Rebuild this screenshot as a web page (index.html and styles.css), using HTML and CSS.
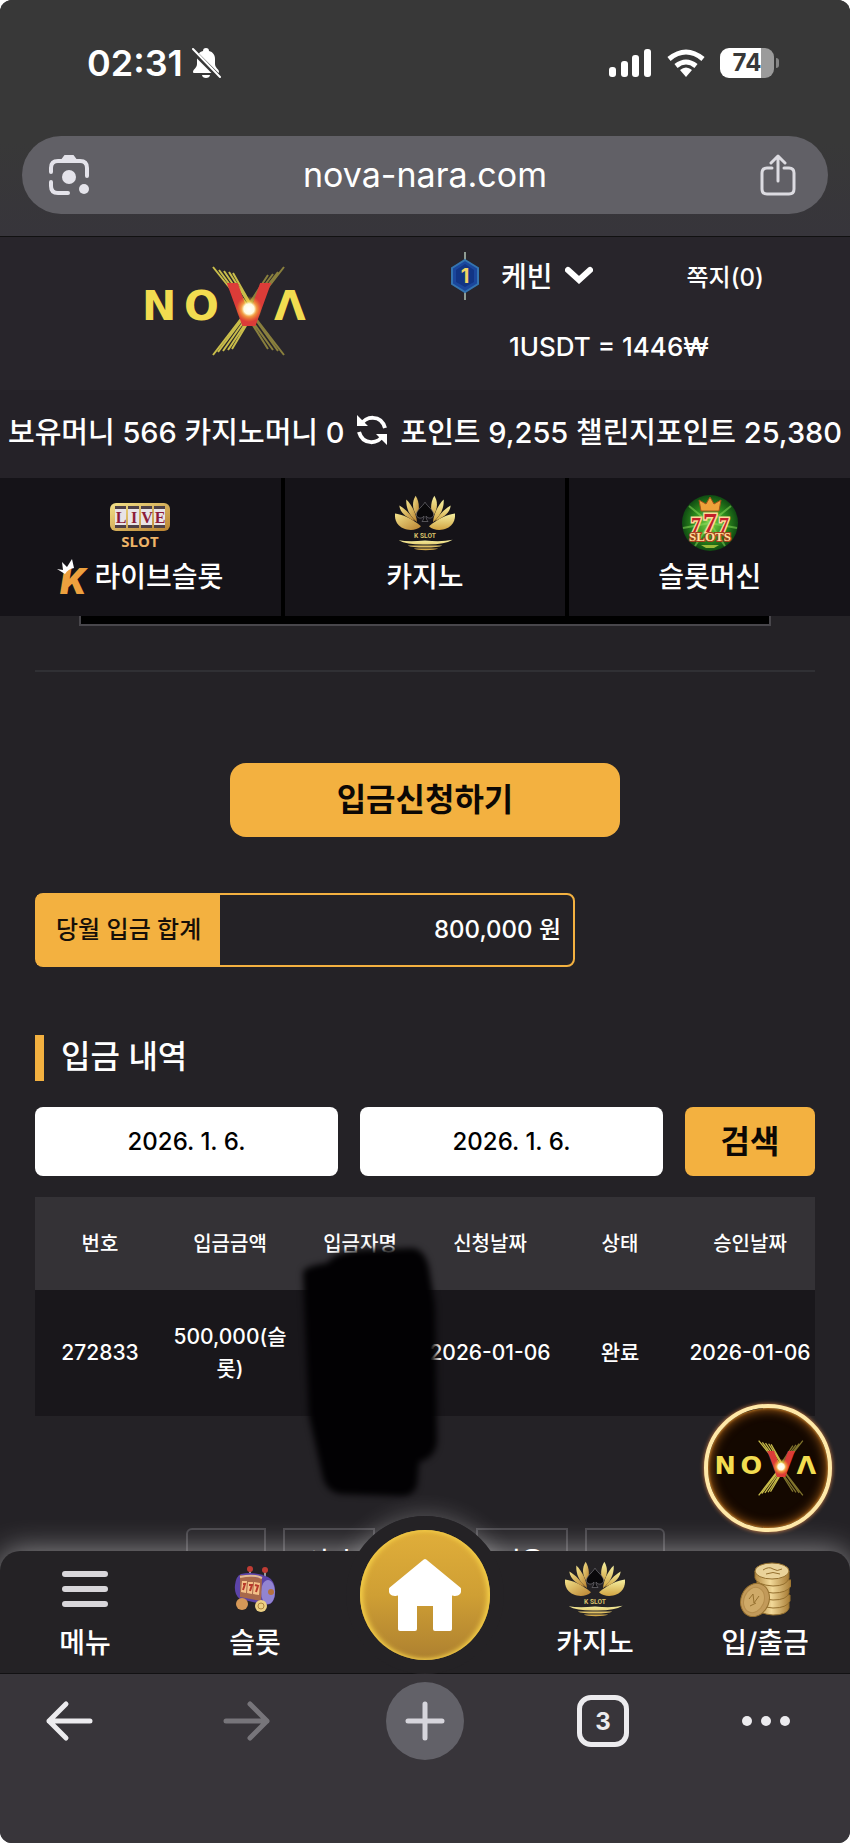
FILE: index.html
```html
<!DOCTYPE html>
<html lang="ko">
<head>
    <meta charset="UTF-8">
    <meta name="viewport" content="width=device-width, initial-scale=1.0">
    <title>nova-nara.com</title>
    <link rel="stylesheet" href="styles.css">
</head>
<body>
    <!-- shared gradients -->
    <svg class="defs" width="0" height="0" aria-hidden="true">
        <defs>
            <linearGradient id="gold" x1="0" y1="0" x2="1" y2="1">
                <stop offset="0" stop-color="#f3e28a"/>
                <stop offset="1" stop-color="#b9812f"/>
            </linearGradient>
            <linearGradient id="goldRight" x1="0" y1="0" x2="0" y2="1">
                <stop offset="0" stop-color="#f6f0a0"/>
                <stop offset="1" stop-color="#d1a442"/>
            </linearGradient>
            <radialGradient id="flare">
                <stop offset="0" stop-color="#fff"/>
                <stop offset="0.4" stop-color="#fffbe0"/>
                <stop offset="0.6" stop-color="#ffd84a" stop-opacity="0.6"/>
                <stop offset="1" stop-color="#ffb020" stop-opacity="0"/>
            </radialGradient>
            <radialGradient id="green">
                <stop offset="0" stop-color="#7fd04a"/>
                <stop offset="0.6" stop-color="#2c8a1c"/>
                <stop offset="1" stop-color="#0f4a12"/>
            </radialGradient>
            <linearGradient id="coin" x1="0" y1="0" x2="1" y2="0">
                <stop offset="0" stop-color="#b58a42"/>
                <stop offset="0.45" stop-color="#f2d999"/>
                <stop offset="1" stop-color="#a87c35"/>
            </linearGradient>
        </defs>
    </svg>

    <header class="browser-top">
        <div class="status-bar">
            <div class="status-left">
                <span class="time">02:31</span>
                <svg width="30" height="32" viewBox="0 0 30 32" aria-hidden="true">
                    <path d="M15 1c2 0 3 1 3 3 4 1 6 4 6 8v5c0 4 4 5 4 8 0 1-1 1-2 1H4c-1 0-2 0-2-1 0-3 4-4 4-8v-5c0-4 2-7 6-8 0-2 1-3 3-3zM11 28h8c0 2-2 3-4 3s-4-1-4-3z" fill="#fff"/>
                    <path d="M1 3l28 28" stroke="#383838" stroke-width="5"/>
                    <path d="M2 2l27 28" stroke="#fff" stroke-width="2" stroke-linecap="round"/>
                </svg>
            </div>
            <div class="status-right">
                <svg width="43" height="28" viewBox="0 0 43 28" fill="#fff" aria-hidden="true">
                    <rect x="0" y="18" width="7" height="10" rx="3"/>
                    <rect x="12" y="12" width="7" height="16" rx="3"/>
                    <rect x="23" y="6" width="7" height="22" rx="3"/>
                    <rect x="35" y="0" width="7" height="28" rx="3"/>
                </svg>
                <svg width="38" height="28" viewBox="0 0 38 28" fill="none" stroke="#fff" stroke-width="5" aria-hidden="true">
                    <path d="M2 10Q19-4 36 10"/>
                    <path d="M9 17Q19 9 29 17"/>
                    <path d="M13 21Q19 16 25 21L19 28Z" fill="#fff" stroke="none"/>
                </svg>
                <div class="battery"><span>74</span></div>
            </div>
        </div>
        <div class="url-bar">
            <button class="icon-btn" aria-label="이미지 검색">
                <svg width="42" height="42" viewBox="0 0 42 42" fill="none" stroke="#e4e3ea" stroke-width="4" stroke-linecap="round">
                    <path d="M3 18V14Q3 7 10 7H32Q39 7 39 14V22M3 28V32Q3 39 10 39H20"/>
                    <path d="M14 6L17 2H25L28 6Z" fill="#e4e3ea" stroke-width="2"/>
                    <circle cx="21" cy="23" r="7" fill="#e4e3ea" stroke="none"/>
                    <circle cx="36" cy="35" r="5" fill="#e4e3ea" stroke="none"/>
                </svg>
            </button>
            <span class="url">nova-nara.com</span>
            <button class="icon-btn" aria-label="공유">
                <svg width="36" height="42" viewBox="0 0 36 42" fill="none" stroke="#dcdbe1" stroke-width="3" stroke-linecap="round" stroke-linejoin="round">
                    <path d="M12 14H7Q2 14 2 19V35Q2 40 7 40H29Q34 40 34 35V19Q34 14 29 14H24M18 27V3M11 9L18 2L25 9"/>
                </svg>
            </button>
        </div>
    </header>

    <div class="site-header">
        <a class="logo" href="#" aria-label="NOVA">
            <svg width="166" height="90" viewBox="0 0 166 90">
                <g id="nova">
                    <g fill="none" stroke="#c9bd4a" stroke-width="2">
                        <path d="M68 1L104 46M74 4L105 46M79 5L106 45M84 6L108 44M88 7L109 44"/>
                        <path d="M139 1L104 46M133 6L103 45M128 8L101 44M123 9L100 44" opacity="0.6"/>
                        <path d="M68 89L98 50M73 86L100 50M78 85L102 51M83 84L104 52M87 83L105 53"/>
                        <path d="M139 89L109 50M133 85L108 50M128 84L105 52M123 83L104 53" opacity="0.6"/>
                    </g>
                    <g font-family="DejaVu Sans, sans-serif" font-size="41" font-weight="bold" fill="#f2dc50">
                        <text x="-3" y="54">N</text>
                        <text x="39" y="54">O</text>
                        <text x="129" y="54">Λ</text>
                    </g>
                    <text x="104" y="60" text-anchor="middle" font-family="DejaVu Sans, sans-serif" font-size="58" font-weight="bold" fill="#dc3c38">V</text>
                    <circle cx="104" cy="43" r="13" fill="url(#flare)"/>
                </g>
            </svg>
        </a>
        <div class="user">
            <div class="user-row">
                <svg width="28" height="48" viewBox="0 0 28 48" aria-hidden="true">
                    <path d="M14 0V9M14 39V48" stroke="#8f9c92" stroke-width="2"/>
                    <path d="M14 8L27 16V32L14 40L1 32V16Z" fill="#1b479c" stroke="#3474b0" stroke-width="2"/>
                    <path d="M14 12L23 18V30L14 35L5 30V18Z" fill="#123584"/>
                    <text x="14" y="31" text-anchor="middle" font-family="Inter, sans-serif" font-size="20" font-weight="bold" fill="#f2d464">1</text>
                </svg>
                <button class="user-name">케빈
                    <svg width="28" height="18" viewBox="0 0 28 18" fill="none" stroke="#fff" stroke-width="6" stroke-linecap="round"><path d="M3 4L14 14L25 4"/></svg>
                </button>
                <a class="message" href="#">쪽지(0)</a>
            </div>
            <div class="rate">1USDT = 1446₩</div>
        </div>
    </div>

    <div class="money">
        <span>보유머니 566 카지노머니 0</span>
        <button class="icon-btn" aria-label="새로고침">
            <svg width="32" height="32" viewBox="0 0 32 32" fill="none" stroke="#fff" stroke-width="4">
                <path d="M5 11C9 2 25 0 29 14M27 21C23 30 7 32 3 18"/>
                <path d="M1 1V12H12ZM31 31V20H20Z" fill="#fff" stroke="none"/>
            </svg>
        </button>
        <span>포인트 9,255 챌린지포인트 25,380</span>
    </div>

    <nav class="games">
        <a href="#">
            <svg width="62" height="58" viewBox="0 0 62 58" aria-hidden="true">
                <rect x="1" y="9" width="60" height="28" rx="6" fill="url(#gold)"/>
                <path d="M6 12H17V34H6ZM19 12H30V34H19ZM32 12H43V34H32ZM45 12H56V34H45Z" fill="#e8e4e6"/>
                <path d="M6 12H17V15H6ZM19 12H30V15H19ZM32 12H43V15H32ZM45 12H56V15H45ZM6 31H17V34H6ZM19 31H30V34H19ZM32 31H43V34H32ZM45 31H56V34H45Z" fill="#4e4147"/>
                <g font-family="Liberation Serif, serif" font-size="16" font-weight="bold" fill="#8c1c38" text-anchor="middle">
                    <text x="12" y="29">L</text><text x="25" y="29">I</text><text x="38" y="29">V</text><text x="51" y="29">E</text>
                </g>
                <text x="31" y="53" text-anchor="middle" font-family="Open Sans, sans-serif" font-size="15" font-weight="bold" fill="#eeb468">SLOT</text>
            </svg>
            <span class="label">
                <svg width="34" height="36" viewBox="0 0 34 36" aria-hidden="true">
                    <text x="3" y="35" font-family="Inter, sans-serif" font-size="35" font-weight="900" font-style="italic" fill="#eda13e">K</text>
                    <path d="M0 10L6 11L5 3L10 8L15 0L17 9Q11 10 8 15Z" fill="#fff"/>
                </svg>라이브슬롯
            </span>
        </a>
        <a href="#">
            <svg width="60" height="58" viewBox="0 0 180 165">
                <g id="lotus">
                    <g fill="url(#gold)">
                        <path d="M0 54C20 56 52 70 78 92C60 110 22 106 7 84C1 75-1 64 0 54Z"/>
                        <path d="M13 30C32 40 50 62 60 77C38 66 16 56 13 30Z"/>
                        <path d="M34 12C52 30 64 56 66 80C44 62 32 38 34 12Z"/>
                        <path d="M62 1C74 20 74 44 66 62C52 42 50 20 62 1Z"/>
                    </g>
                    <g fill="url(#goldRight)">
                        <path d="M180 54C160 56 128 70 102 92C120 110 158 106 173 84C179 75 181 64 180 54Z"/>
                        <path d="M167 30C148 40 130 62 120 77C142 66 164 56 167 30Z"/>
                        <path d="M146 12C128 30 116 56 114 80C136 62 148 38 146 12Z"/>
                        <path d="M118 1C106 20 106 44 114 62C128 42 130 20 118 1Z"/>
                    </g>
                    <path d="M90 20C98 34 116 44 116 57C116 68 101 72 93 62C93 70 96 74 99 78H81C84 74 87 70 87 62C79 72 64 68 64 57C64 44 82 34 90 20Z" fill="#0a090b" stroke="#77757c" stroke-width="2"/>
                    <text x="90" y="127" text-anchor="middle" font-family="Roboto, sans-serif" font-size="20" font-weight="bold" fill="#d8c06a">K SLOT</text>
                    <path d="M11 134Q40 140 90 135Q140 140 173 133Q150 148 90 147Q36 148 11 134ZM38 150H142Q130 156 90 156Q50 156 38 150ZM56 159H130Q118 164 92 164Q66 164 56 159Z" fill="url(#goldRight)"/>
                </g>
            </svg>
            <span class="label">카지노</span>
        </a>
        <a href="#">
            <svg width="58" height="58" viewBox="0 0 58 58" aria-hidden="true">
                <circle cx="29" cy="29" r="28" fill="url(#green)"/>
                <path d="M29 29L8 12M29 29L50 12M29 29L2 34M29 29L56 34M29 29L14 52M29 29L44 52" stroke="#8fe05c" stroke-width="2" opacity="0.5"/>
                <path d="M20 17L18 6L25 10L29 3L33 10L40 6L38 17Z" fill="#eea23a" stroke="#a2521c"/>
                <g font-family="Liberation Serif, serif" font-weight="bold" text-anchor="middle" fill="#c2202a" stroke="#ffd89a" paint-order="stroke" stroke-width="3">
                    <text x="15" y="38" font-size="20">7</text>
                    <text x="43" y="38" font-size="20">7</text>
                    <text x="29" y="38" font-size="28">7</text>
                    <text x="29" y="47" font-size="13" fill="#ffe0a0" stroke="#a8401c" stroke-width="2">SLOTS</text>
                </g>
                <path d="M20 51H38L33 54H25Z" fill="#9aba3a"/>
            </svg>
            <span class="label">슬롯머신</span>
        </a>
    </nav>

    <main>
        <div class="frame-end"></div>
        <hr>
        <button class="submit">입금신청하기</button>

        <div class="total">
            <span class="total-label">당월 입금 합계</span>
            <span class="total-value">800,000 원</span>
        </div>

        <h2>입금 내역</h2>
        <form class="search">
            <input type="text" value="2026. 1. 6." aria-label="시작일">
            <input type="text" value="2026. 1. 6." aria-label="종료일">
            <button type="button">검색</button>
        </form>

        <div class="history">
            <table>
                <thead>
                    <tr><th>번호</th><th>입금금액</th><th>입금자명</th><th>신청날짜</th><th>상태</th><th>승인날짜</th></tr>
                </thead>
                <tbody>
                    <tr><td>272833</td><td>500,000(슬롯)</td><td></td><td>2026-01-06</td><td>완료</td><td>2026-01-06</td></tr>
                </tbody>
            </table>
            <svg class="mask" width="140" height="254" viewBox="0 0 140 254" aria-hidden="true">
                <path d="M2 26Q4 20 26 17Q34 6 60 4L112 2Q124 4 128 22L134 60L136 196Q134 212 118 216L116 240Q112 250 100 250L40 248Q26 246 22 232L8 170Z"/>
            </svg>
        </div>

        <div class="paging">
            <button class="edge" aria-label="처음"></button>
            <button>이전</button>
            <button class="current">1</button>
            <button>다음</button>
            <button class="edge" aria-label="마지막"></button>
        </div>
    </main>

    <nav class="tabs">
        <a class="floating" href="#" aria-label="NOVA">
            <svg width="104" height="56" viewBox="0 0 166 90"><use href="#nova"/></svg>
        </a>
        <div class="tabs-bar">
            <a href="#">
                <svg width="46" height="56" viewBox="0 0 46 56" stroke="#d8d6da" stroke-width="6" stroke-linecap="round" aria-hidden="true"><path d="M3 13H43M3 28H43M3 43H43"/></svg>
                <span class="label">메뉴</span>
            </a>
            <a href="#">
                <svg width="42" height="56" viewBox="0 0 42 56" aria-hidden="true">
                    <path d="M16 8V16M31 9V18" stroke="#99999f" stroke-width="2"/>
                    <circle cx="16" cy="8" r="3" fill="#c03c34"/>
                    <circle cx="31" cy="9" r="3" fill="#c03c34"/>
                    <path d="M7 13Q20 10 34 16Q42 20 41 33Q40 44 32 44L6 38Q0 34 1 24Q2 15 7 13Z" fill="#5c44a8"/>
                    <ellipse cx="34" cy="31" rx="7" ry="12" fill="#9284d2"/>
                    <path d="M6 14L28 17L27 40L6 36Z" fill="#a8684a"/>
                    <path d="M8 20L13 20L12 32L7 31ZM14 21L19 21L18 33L13 32ZM20 21L26 22L25 34L19 33Z" fill="#f4c088"/>
                    <path d="M9 23L11 23L9 29M15 24L18 24L16 30M21 24L24 25L22 31" fill="none" stroke="#b83a2c" stroke-width="2"/>
                    <path d="M6 16Q20 13 28 17" stroke="#e2ba94" stroke-width="2" fill="none"/>
                    <circle cx="37" cy="31" r="3" fill="#b5713e"/>
                    <ellipse cx="8" cy="43" rx="6" ry="6" fill="#d59858"/>
                    <circle cx="27" cy="45" r="6" fill="#ecd084"/>
                    <circle cx="27" cy="45" r="3" fill="none" stroke="#ae8440"/>
                </svg>
                <span class="label">슬롯</span>
            </a>
            <a class="home" href="#" aria-label="홈">
                <svg width="72" height="74" viewBox="0 0 72 74" fill="#fff" stroke="#fff" stroke-width="4" stroke-linejoin="round"><path d="M36 3L70 31Q71 36 66 36L61 35V71H46V46H26V71H11V35L6 36Q1 36 2 31Z"/></svg>
            </a>
            <a href="#">
                <svg width="60" height="56" viewBox="0 0 180 165"><use href="#lotus"/></svg>
                <span class="label">카지노</span>
            </a>
            <a href="#">
                <svg width="52" height="56" viewBox="0 0 52 56" stroke="#95702f" aria-hidden="true">
                    <g fill="url(#coin)">
                        <path d="M18 42H50V47Q48 54 34 54Q20 53 18 47Z"/>
                        <path d="M18 34H51V40Q48 47 34 47Q20 46 18 40Z"/>
                        <path d="M17 26H50V32Q48 39 34 39Q20 38 17 32Z"/>
                        <path d="M18 19H52V25Q48 32 34 32Q20 31 18 25Z"/>
                        <path d="M16 10H50V17Q48 25 34 25Q18 24 16 17Z"/>
                    </g>
                    <ellipse cx="33" cy="10" rx="17" ry="8" fill="#ead39a"/>
                    <path d="M24 9Q30 5 34 8T43 8M27 13Q34 10 41 13" fill="none"/>
                    <ellipse cx="16" cy="39" rx="14" ry="17" transform="rotate(22 16 39)" fill="#c29a5a"/>
                    <ellipse cx="15" cy="39" rx="10" ry="13" transform="rotate(22 15 39)" fill="#cfaa68" stroke="#b58d4c"/>
                    <path d="M10 38L14 33L15 42L20 35M11 45L17 42" fill="none"/>
                </svg>
                <span class="label">입/출금</span>
            </a>
        </div>
    </nav>

    <footer class="browser-bottom">
        <button aria-label="뒤로">
            <svg width="48" height="42" viewBox="0 0 48 42" fill="none" stroke="#ecebee" stroke-width="5" stroke-linecap="round" stroke-linejoin="round"><path d="M45 21H4M21 4L4 21L21 38"/></svg>
        </button>
        <button aria-label="앞으로">
            <svg width="48" height="42" viewBox="0 0 48 42" fill="none" stroke="#77757a" stroke-width="5" stroke-linecap="round" stroke-linejoin="round"><path d="M3 21H44M27 4L44 21L27 38"/></svg>
        </button>
        <button class="new-tab" aria-label="새 탭">
            <svg width="40" height="40" viewBox="0 0 40 40" stroke="#d6d5dc" stroke-width="5" stroke-linecap="round"><path d="M3 20H37M20 3V37"/></svg>
        </button>
        <button aria-label="탭 3개"><span class="tab-count">3</span></button>
        <button class="more" aria-label="더보기">
            <svg width="48" height="12" viewBox="0 0 48 12" fill="#ecebee"><circle cx="5" cy="6" r="5"/><circle cx="24" cy="6" r="5"/><circle cx="43" cy="6" r="5"/></svg>
        </button>
    </footer>
</body>
</html>
```
FILE: styles.css
```css
* {
    box-sizing: border-box;
}

html {
    background: #fff;
}

body {
    display: flex;
    flex-direction: column;
    height: 100vh;
    margin: 0;
    overflow: hidden;
    border-radius: 12px;
    background: #242226;
    color: #fff;
    font-family: Inter, 'Noto Sans CJK KR', sans-serif;
    font-size: 28px;
    font-weight: 500;
}

svg {
    display: block;
    flex: none;
}

.defs {
    position: absolute;
}

a {
    color: inherit;
    text-decoration: none;
}

button, input {
    margin: 0;
    padding: 0;
    border: none;
    background: none;
    color: inherit;
    font: inherit;
}

button {
    cursor: pointer;
}

.label {
    display: flex;
    align-items: center;
    gap: 3px;
    height: 38px;
    line-height: 38px;
    white-space: nowrap;
}

/* browser chrome */
.browser-top {
    flex: none;
    padding-bottom: 22px;
    border-bottom: 1px solid #111;
    background: linear-gradient(#383838 60%, #37353b);
}

.status-bar {
    display: flex;
    align-items: center;
    justify-content: space-between;
    height: 124px;
    margin-bottom: 12px;
    padding: 2px 71px 0 87px;
}

.status-left, .status-right {
    display: flex;
    align-items: center;
    gap: 8px;
}

.status-right {
    gap: 15px;
}

.time {
    font-size: 36px;
    font-weight: 600;
}

.battery {
    position: relative;
    width: 54px;
    height: 30px;
    margin-right: 5px;
    border-radius: 9px;
    background: linear-gradient(90deg, #fff 41px, #9b9b9b 41px);
    color: #383838;
    font-size: 24px;
    font-weight: 700;
    line-height: 30px;
    text-align: center;
}

.battery::after {
    content: '';
    position: absolute;
    top: 10px;
    right: -5px;
    width: 3px;
    height: 10px;
    border-radius: 0 3px 3px 0;
    background: #858585;
}

.url-bar {
    display: flex;
    align-items: center;
    justify-content: space-between;
    height: 78px;
    margin: 0 22px;
    padding: 0 32px 0 26px;
    border-radius: 39px;
    background: #616066;
}

.url {
    padding-bottom: 2px;
    font-size: 34px;
    font-weight: 400;
}

/* site header */
.site-header {
    display: flex;
    flex: none;
    height: 153px;
    background: #28252b;
}

.logo {
    display: flex;
    flex: 0 0 50%;
    align-items: center;
    justify-content: center;
    padding: 0 0 6px 30px;
}

.user {
    flex: 1;
    padding-left: 26px;
}

.user-row {
    display: flex;
    align-items: center;
    height: 78px;
}

.user-name {
    display: flex;
    align-items: center;
    gap: 12px;
    margin-left: 22px;
    padding-bottom: 2px;
}

.message {
    margin-left: 94px;
    padding-bottom: 2px;
    font-size: 24px;
}

.rate {
    padding-left: 58px;
    font-size: 26px;
    line-height: 64px;
}

.money {
    display: flex;
    flex: none;
    align-items: center;
    justify-content: center;
    gap: 12px;
    height: 88px;
    padding-bottom: 8px;
    background: #252228;
    font-size: 29px;
    white-space: nowrap;
}

.games {
    display: grid;
    flex: none;
    grid-template-columns: repeat(3, 1fr);
    gap: 4px;
    background: #000;
}

.games a {
    display: flex;
    flex-direction: column;
    align-items: center;
    gap: 6px;
    padding: 16px 0 20px;
    background: #151318;
}

/* deposit page */
main {
    flex: 1;
    min-height: 0;
    padding: 0 35px;
    overflow-y: auto;
    scrollbar-width: none;
}

.frame-end {
    height: 10px;
    margin: 0 44px;
    border: 2px solid #48464b;
    border-top: none;
    background: #000;
}

hr {
    height: 2px;
    margin: 44px 0 0;
    border: none;
    background: #303034;
}

.submit {
    display: block;
    width: 50%;
    height: 74px;
    margin: 91px auto 0;
    padding-bottom: 6px;
    border-radius: 16px;
    background: #f3b140;
    color: #0c0805;
    font-size: 32px;
    font-weight: 700;
}

.total {
    display: flex;
    align-items: stretch;
    width: 540px;
    max-width: 100%;
    height: 74px;
    margin-top: 56px;
    border: 2px solid #f3b140;
    border-radius: 8px;
    font-size: 24px;
    line-height: 70px;
}

.total-label {
    padding: 0 19px;
    background: #f3b140;
    color: #160f08;
}

.total-value {
    flex: 1;
    padding-right: 12px;
    text-align: right;
}

h2 {
    height: 46px;
    margin: 68px 0 26px;
    padding-left: 17px;
    border-left: 9px solid #f3b140;
    font-size: 32px;
    font-weight: 500;
    line-height: 44px;
}

.search {
    display: grid;
    grid-template-columns: 1fr 1fr 130px;
    gap: 22px;
    height: 69px;
}

.search input {
    width: 100%;
    border-radius: 8px;
    background: #fff;
    color: #000;
    font-size: 24px;
    text-align: center;
}

.search button {
    padding-bottom: 6px;
    border-radius: 8px;
    background: #f3b140;
    color: #0c0805;
    font-size: 32px;
    font-weight: 700;
}

.history {
    position: relative;
    margin-top: 21px;
}

table {
    width: 100%;
    border-collapse: collapse;
    table-layout: fixed;
    font-size: 20px;
    line-height: 32px;
    text-align: center;
}

th {
    height: 93px;
    padding: 0;
    background: #343236;
    font-weight: 500;
}

td {
    height: 126px;
    padding: 0;
    background: #19171b;
    font-size: 21px;
    word-break: break-all;
}

/* covers the depositor's name */
.mask {
    position: absolute;
    top: 49px;
    left: 266px;
    fill: #020103;
    filter: blur(3px);
}

.paging {
    display: flex;
    justify-content: center;
    gap: 17px;
    margin-top: 112px;
}

.paging button {
    width: 92px;
    height: 60px;
    border: 2px solid #48464b;
    background: #242226;
    font-size: 24px;
}

.paging .edge {
    width: 80px;
}

.paging .current {
    width: 67px;
}

.paging .edge:first-child {
    border-radius: 6px 0 0 6px;
}

.paging .edge:last-child {
    border-radius: 0 6px 6px 0;
}

/* bottom navigation */
.tabs {
    position: relative;
    flex: none;
}

.tabs::before {
    content: '';
    position: absolute;
    top: -35px;
    left: calc(50% - 79px);
    width: 158px;
    height: 158px;
    border-radius: 50%;
    box-shadow: 0 0 24px rgba(255, 255, 255, 0.28);
}

.tabs-bar {
    position: relative;
    display: grid;
    grid-template-columns: repeat(5, 1fr);
    height: 123px;
    border-bottom: 1px solid #121113;
    border-radius: 20px 20px 0 0;
    background: #242225;
    box-shadow: 0 0 30px rgba(255, 255, 255, 0.5);
}

.tabs-bar a {
    display: flex;
    flex-direction: column;
    align-items: center;
    gap: 7px;
    padding-top: 10px;
}

.tabs-bar .home {
    position: relative;
    align-self: start;
    justify-self: center;
    justify-content: center;
    width: 158px;
    height: 158px;
    margin-top: -35px;
    padding: 0;
    border: 14px solid #242225;
    border-radius: 50%;
    background: #242225;
}

.tabs-bar .home::before {
    content: '';
    position: absolute;
    inset: 0;
    border-radius: 50%;
    background: linear-gradient(#e0ae3a, #cf9f34 50%, #ad8030);
    box-shadow: inset 3px 0 5px #f3cd48, inset -3px 0 5px #f3cd48;
}

.home svg {
    position: relative;
}

.floating {
    position: absolute;
    right: 18px;
    bottom: 142px;
    z-index: 1;
    display: flex;
    align-items: center;
    justify-content: center;
    width: 128px;
    height: 128px;
    border: 4px solid #ffe9a8;
    border-radius: 50%;
    background: #140800;
    box-shadow: inset 0 0 12px #c8741c, inset 0 0 3px #ffb84a, 0 0 4px #e08a4a;
}

.browser-bottom {
    position: relative;
    display: flex;
    flex: none;
    justify-content: space-between;
    padding: 8px 30px 83px;
    background: #38353a;
}

.browser-bottom button {
    display: flex;
    align-items: center;
    justify-content: center;
    width: 78px;
    height: 78px;
}

.browser-bottom .new-tab {
    border-radius: 50%;
    background: #626168;
}

.browser-bottom .more {
    justify-content: flex-start;
}

.tab-count {
    width: 52px;
    height: 52px;
    border: 5px solid #ecebee;
    border-radius: 14px;
    color: #ecebee;
    font-size: 24px;
    font-weight: 700;
    line-height: 43px;
}
```
